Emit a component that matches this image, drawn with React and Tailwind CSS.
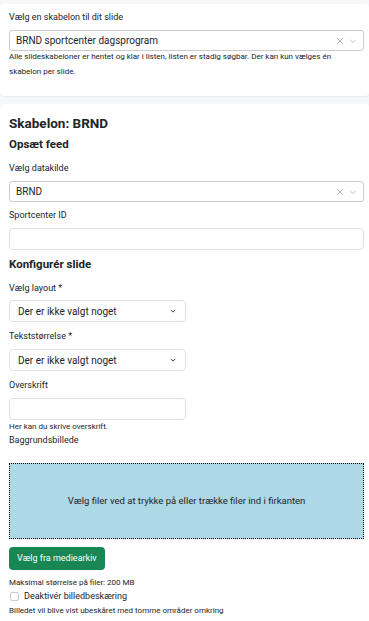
import React from 'react';

const font = { fontFamily: 'Roboto, "Noto Sans", sans-serif' };

function ClearChevron() {
  return (
    <div className="flex items-center gap-[5px] pr-[6px] text-[#b3b3b3]">
      <svg width="8" height="8" viewBox="0 0 10 10" fill="none" stroke="currentColor" strokeWidth="1.2">
        <path d="M1.5 1.5l7 7M8.5 1.5l-7 7" />
      </svg>
      <svg width="8" height="8" viewBox="0 0 10 10" fill="none" stroke="currentColor" strokeWidth="1">
        <path d="M1.5 3.5l3.5 3.5 3.5-3.5" />
      </svg>
    </div>
  );
}

function ComboSelect({ value }) {
  return (
    <div className="flex h-[21px] items-center justify-between rounded-[3px] border border-[#cccccc] bg-white">
      <span className="pl-[6px] text-[10px] text-[#212529]">{value}</span>
      <ClearChevron />
    </div>
  );
}

function SmallSelect() {
  return (
    <div className="flex h-[22px] w-[177px] items-center justify-between rounded-[4px] border border-[#dee2e6] bg-white">
      <span className="pl-[8px] text-[10px] text-[#212529]">Der er ikke valgt noget</span>
      <svg className="mr-[9px]" width="6" height="6" viewBox="0 0 16 16" fill="none" stroke="#343a40" strokeWidth="2.5">
        <path d="M2 5l6 6 6-6" />
      </svg>
    </div>
  );
}

const Label = ({ children, className = '' }) => (
  <div className={`text-[9px] leading-[14px] text-[#212529] ${className}`}>{children}</div>
);

const Help = ({ children, className = '' }) => (
  <div className={`text-[8px] text-[#212529] ${className}`}>{children}</div>
);

export default function App() {
  return (
    <div className="min-h-[621px] bg-[#f6f7f9] pt-[4px]" style={font}>
      <div className="rounded-[4px] bg-white pb-[17px] pl-[9px] pr-[5px] pt-[6px] shadow-[0_1px_2px_rgba(0,0,0,0.06)]">
        <Label className="mb-[6px]">Vælg en skabelon til dit slide</Label>
        <ComboSelect value="BRND sportcenter dagsprogram" />
        <Help className="-mt-[2px] leading-[15px]">
          Alle slideskabeloner er hentet og klar i listen, listen er stadig søgbar. Der kan kun vælges én skabelon per slide.
        </Help>
      </div>

      <div className="mt-[8px] rounded-[4px] bg-white pb-[8px] pl-[9px] pr-[5px] pt-[9px]">
        <h2 className="text-[13.5px] font-bold leading-[20px] text-[#212529]">Skabelon: BRND</h2>
        <h3 className="mt-[3px] text-[11.5px] font-bold leading-[17px] text-[#212529]">Opsæt feed</h3>

        <Label className="mt-[8px] mb-[6px]">Vælg datakilde</Label>
        <ComboSelect value="BRND" />

        <Label className="mt-[6px] mb-[6px]">Sportcenter ID</Label>
        <div className="h-[22px] rounded-[4px] border border-[#dee2e6] bg-white" />

        <h3 className="mt-[6px] text-[11.5px] font-bold leading-[17px] text-[#212529]">Konfigurér slide</h3>

        <Label className="mt-[8px] mb-[5px]">Vælg layout *</Label>
        <SmallSelect />

        <Label className="mt-[7px] mb-[6px]">Tekststørrelse *</Label>
        <SmallSelect />

        <Label className="mt-[7px] mb-[6px]">Overskrift</Label>
        <div className="h-[22px] w-[177px] rounded-[4px] border border-[#dee2e6] bg-white" />
        <Help className="mt-[1px] leading-[12px]">Her kan du skrive overskrift.</Help>
        <Label className="leading-[12px]">Baggrundsbillede</Label>

        <div className="mt-[16px] flex h-[76px] items-center justify-center border border-dotted border-black bg-[#add8e6]">
          <span className="text-[9.5px] text-[#212529]">Vælg filer ved at trykke på eller trække filer ind i firkanten</span>
        </div>

        <button
          type="button"
          className="mt-[8px] block h-[23px] rounded-[4px] bg-[#198754] px-[8px] text-[9px] text-white"
        >
          Vælg fra mediearkiv
        </button>

        <Help className="mt-[6px] leading-[13px]">Maksimal størrelse på filer: 200 MB</Help>
        <label className="flex items-center gap-[5px]">
          <span className="ml-[1px] h-[9px] w-[9px] rounded-[2px] border border-[#c8ccd0] bg-white" />
          <span className="text-[9px] leading-[14px] text-[#212529]">Deaktivér billedbeskæring</span>
        </label>
        <Help className="mt-[1px] leading-[14px]">Billedet vil blive vist ubeskåret med tomme områder omkring</Help>
      </div>
    </div>
  );
}
